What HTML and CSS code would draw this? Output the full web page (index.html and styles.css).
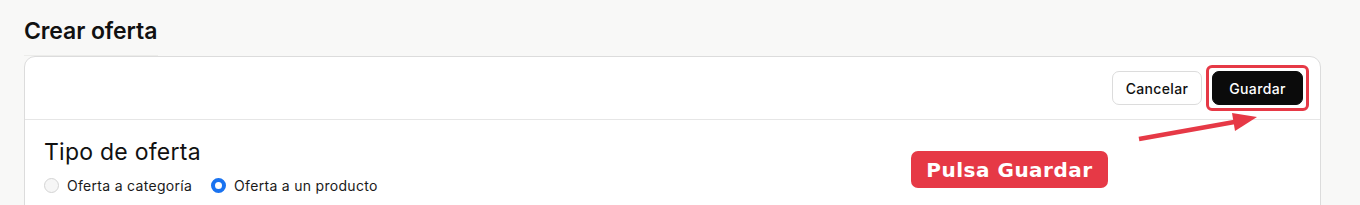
FILE: index.html
```html
<!DOCTYPE html>
<html lang="es">
<head>
<meta charset="utf-8">
<link rel="stylesheet" href="styles.css">
</head>
<body>
<main class="page">
  <h1 class="page-title">Crear oferta</h1>
  <section class="card">
    <div class="card-header">
      <button class="btn btn-secondary">Cancelar</button>
      <div class="highlight">
        <button class="btn btn-primary">Guardar</button>
      </div>
    </div>
    <div class="card-body">
      <h2 class="section-title">Tipo de oferta</h2>
      <div class="radio-group">
        <label class="radio"><span class="radio-dot"></span>Oferta a categoría</label>
        <label class="radio"><span class="radio-dot checked"></span>Oferta a un producto</label>
      </div>
    </div>
  </section>
</main>
<svg class="arrow" width="1360" height="205" viewBox="0 0 1360 205">
  <line x1="1139" y1="139" x2="1240" y2="121" stroke="#e63946" stroke-width="4.5"/>
  <polygon points="1232,113 1257,117 1235,131" fill="#e63946"/>
</svg>
<div class="callout">Pulsa Guardar</div>
</body>
</html>
```
FILE: styles.css
```css
html, body {
  margin: 0;
  padding: 0;
  background: #f8f8f7;
  font-family: Inter, "Noto Sans", sans-serif;
  color: #111;
  height: 205px;
  overflow: hidden;
}
.page {
  padding: 16px 39px 0 24px;
}
.page-title {
  margin: 0;
  font-size: 23px;
  font-weight: 600;
  letter-spacing: -0.1px;
  line-height: 30px;
  width: 134px;
  padding-bottom: 9px;
  border-bottom: 1px solid #ececea;
}
.card {
  background: #fff;
  border: 1px solid #dcdcdc;
  border-radius: 11px;
  height: 200px;
}
.card-header {
  display: flex;
  justify-content: flex-end;
  align-items: center;
  gap: 4px;
  height: 62px;
  padding-right: 11px;
  border-bottom: 1px solid #e6e6e6;
}
.btn {
  font-family: Inter, "Noto Sans", sans-serif;
  font-size: 14px;
  font-weight: 500;
  letter-spacing: 0.35px;
  height: 34px;
  border-radius: 7px;
  padding: 0;
  cursor: pointer;
}
.btn-secondary {
  background: #fff;
  border: 1px solid #dcdcdc;
  color: #111;
  width: 90px;
}
.btn-primary {
  background: #0b0b0b;
  border: 1px solid #0b0b0b;
  color: #fff;
  width: 91px;
  display: block;
}
.highlight {
  border: 3px solid #e63946;
  border-radius: 6px;
  padding: 3px;
}
.card-body {
  padding: 17px 19px;
}
.section-title {
  margin: 0;
  font-size: 23px;
  font-weight: 400;
  line-height: 30px;
  letter-spacing: 0.25px;
}
.radio-group {
  display: flex;
  gap: 19px;
  margin-top: 10px;
}
.radio {
  display: flex;
  align-items: center;
  gap: 8px;
  font-size: 14px;
  letter-spacing: 0.3px;
  color: #1a1a1a;
}
.radio-dot {
  width: 15px;
  height: 15px;
  border-radius: 50%;
  border: 1px solid #d4d4d4;
  background: #f6f6f6;
  box-sizing: border-box;
}
.radio-dot.checked {
  border: 4.5px solid #1a73f0;
  background: #fff;
}
.arrow {
  position: absolute;
  left: 0;
  top: 0;
  pointer-events: none;
}
.callout {
  position: absolute;
  left: 911px;
  top: 151px;
  width: 197px;
  height: 37px;
  box-sizing: border-box;
  background: #e63946;
  border-radius: 7px;
  color: #fff;
  font-family: "DejaVu Sans", sans-serif;
  font-weight: 700;
  font-size: 20px;
  display: flex;
  align-items: center;
  justify-content: center;
  letter-spacing: 0.5px;
}
```
